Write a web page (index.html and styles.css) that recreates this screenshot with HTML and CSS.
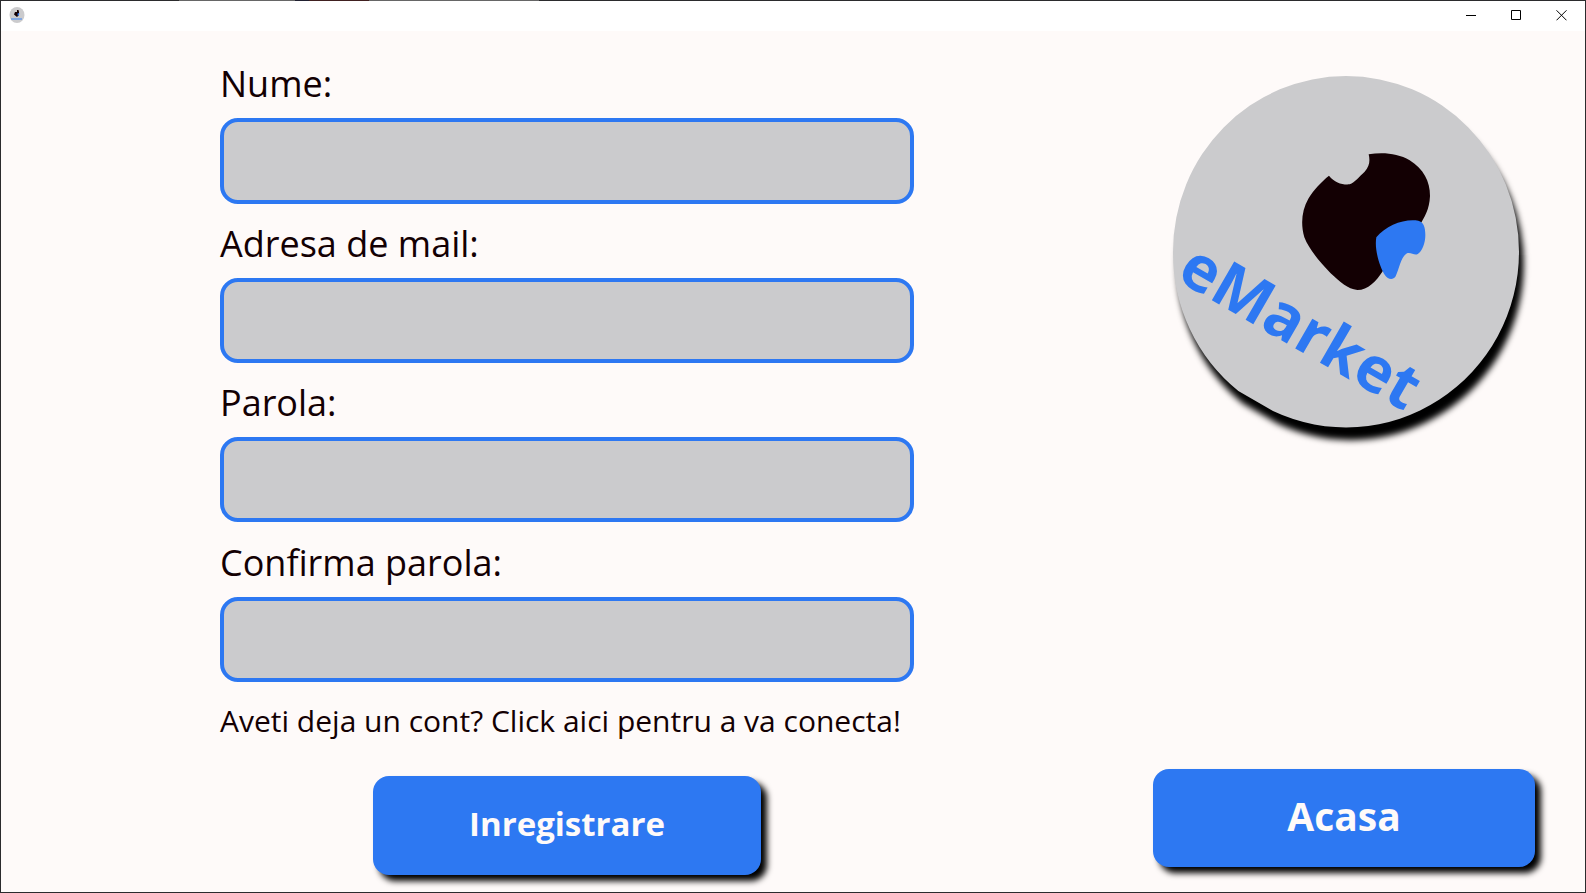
FILE: index.html
```html
<!DOCTYPE html>
<html lang="ro">
<head>
<meta charset="utf-8">
<meta name="viewport" content="width=device-width, initial-scale=1">
<title>eMarket</title>
<link rel="stylesheet" href="styles.css">
</head>
<body>
<div class="window">
  <header class="titlebar">
    <svg class="app-icon" viewBox="0 0 16 16" aria-hidden="true">
      <ellipse cx="8" cy="8" rx="7.500" ry="8" fill="#cbcbcd"/>
      <path d="M8 3 9.500 3 10 5 10 8 8 10 5 7.500 6 5 8 5Z" fill="#130003"/>
      <path d="M8.500 6.500 10.300 6 10 8 8.800 9Z" fill="#2d78f2"/>
      <path d="M2 12h11" stroke="#6f9fe8" stroke-width="1.600"/>
    </svg>
    <div class="caption-buttons">
      <button type="button" class="caption" aria-label="Minimize"><svg viewBox="0 0 11 11"><path d="M0 5.500h10"/></svg></button>
      <button type="button" class="caption" aria-label="Maximize"><svg viewBox="0 0 11 11"><path d="M.5.500h9v9h-9z"/></svg></button>
      <button type="button" class="caption" aria-label="Close"><svg viewBox="0 0 11 11"><path d="M.5.300l10 10M10.500.300l-10 10"/></svg></button>
    </div>
  </header>
  <main class="page">
    <form class="form">
      <label class="label" for="name">Nume:</label>
      <input class="field" id="name" type="text">
      <label class="label" for="mail">Adresa de mail:</label>
      <input class="field" id="mail" type="email">
      <label class="label" for="password">Parola:</label>
      <input class="field" id="password" type="password">
      <label class="label" for="confirm">Confirma parola:</label>
      <input class="field" id="confirm" type="password">
      <a class="login-link" href="#login">Aveti deja un cont? Click aici pentru a va conecta!</a>
      <button class="button register" type="submit">Inregistrare</button>
    </form>
    <aside class="side">
      <svg class="logo" viewBox="10 0 1146 1200" role="img" aria-label="eMarket">
        <path class="disc" d="M370 1053A519 527 0 0 0 1108 575A519 527 0 0 0 589 48A519 527 0 0 0 70 575A519 527 0 0 0 266 993Z"/>
        <path class="fruit" d="M657 283C700 276 745 280 780 301C822 327 841 365 841 408C839 450 825 470 808 500L700 632C680 663 655 690 623 690C595 688 570 665 543 640C510 605 478 568 464 532C452 490 457 450 476 416C492 390 515 365 538 347C555 368 578 375 600 373C616 367 628 350 645 335C661 318 661 300 657 283Z"/>
        <path class="leaf" d="M680 532C710 495 765 475 806 482C822 486 827 502 827 525C827 548 818 575 803 583C792 586 783 576 772 580C754 590 749 625 738 649C730 662 714 658 706 646C692 625 673 570 680 532Z"/>
        <text class="wordmark" transform="translate(76 657) rotate(30)">eMarket</text>
      </svg>
      <button class="button home" type="button">Acasa</button>
    </aside>
  </main>
</div>
</body>
</html>
```
FILE: styles.css
```css
* {
  box-sizing: border-box;
}

body {
  margin: 0;
  font-family: "Open Sans", "Noto Sans", sans-serif;
  color: #130003;
}

.window {
  display: flex;
  flex-direction: column;
  min-height: 100vh;
  padding: 1px;
  background:
    linear-gradient(to right, transparent 179px, #666 179px, #666 295px, #202030 295px, #202030 309px, #402020 309px, #402020 369px, #666 369px, #666 539px, transparent 539px) top / 100% 1px no-repeat,
    #2b2b2d;
}

.titlebar {
  display: flex;
  justify-content: space-between;
  align-items: center;
  height: 30px;
  padding: 0 1px 2px 8px;
  background: #fff;
}

.app-icon {
  width: 16px;
  height: 16px;
}

.caption-buttons {
  display: flex;
  height: 100%;
}

.caption {
  display: grid;
  place-items: center;
  width: 45px;
  padding: 0;
  border: 0;
  background: none;
}

.caption svg {
  width: 11px;
  height: 11px;
  fill: none;
  stroke: #000;
}

.page {
  flex: 1;
  display: grid;
  grid-template-columns: 219fr 694fr 239fr 382fr 50fr;
  background: #fefaf9;
}

.form {
  grid-column: 2;
  display: grid;
  grid-template-rows: 87fr 86fr 74fr 85fr 74fr 85fr 75fr 85fr 94fr 99fr 17fr;
}

.label {
  align-self: end;
  padding-bottom: 8px;
  font-size: 36px;
  line-height: 52px;
}

.field {
  width: 100%;
  min-width: 0;
  padding: 0 20px;
  border: 4px solid #2d78f2;
  border-radius: 18px;
  background: #cbcbcd;
  color: inherit;
  font: inherit;
  font-size: 36px;
  outline: none;
}

.login-link {
  align-self: center;
  padding-bottom: 16px;
  color: inherit;
  font-size: 30px;
  line-height: 40px;
  text-decoration: none;
  white-space: nowrap;
}

.button {
  padding: 0 0 6px;
  border: 0;
  border-radius: 16px;
  background: #2d78f2;
  box-shadow: 6px 6px 6px #000;
  color: #fefaf9;
  font-family: inherit;
  font-weight: 700;
}

.register {
  justify-self: center;
  width: 56%;
  padding-bottom: 4px;
  font-size: 33px;
}

.side {
  grid-column: 4;
  display: flex;
  flex-direction: column;
  justify-content: space-between;
  padding: 29px 0 25px;
}

.logo {
  display: block;
  width: 100%;
  overflow: visible;
}

.disc {
  fill: #cbcbcd;
  filter: drop-shadow(14px 38px 10px #000);
}

.fruit {
  fill: #130003;
}

.leaf,
.wordmark {
  fill: #2d78f2;
}

.wordmark {
  font-size: 188px;
  font-weight: 700;
}

.home {
  height: 98px;
  font-size: 39px;
}
```
